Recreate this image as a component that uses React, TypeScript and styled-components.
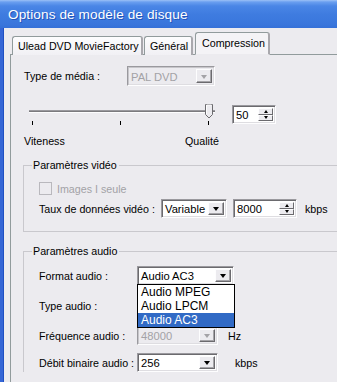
import React from 'react';
import styled, { createGlobalStyle } from 'styled-components';

const Global = createGlobalStyle`
  html, body {
    margin: 0;
    padding: 0;
    background: #ecebef;
  }
  body {
    font-family: "Liberation Sans", Arial, sans-serif;
    font-size: 10.7px;
    color: #000;
  }
`;

const bg = '#ecebef';

const Window = styled.div`
  width: 337px;
  height: 382px;
  overflow: hidden;
  display: flex;
  flex-direction: column;
`;

const TitleBar = styled.div`
  height: 28px;
  flex: none;
  display: flex;
  align-items: center;
  padding: 1px 0 0 8px;
  box-sizing: border-box;
  background: linear-gradient(180deg, #9cc1f6 0px, #6a9ff0 2px, #4a86e6 6px, #3f7ce0 14px, #3a76dc 24px, #3570d8 28px);
  color: #fff;
  font-size: 13.6px;
  letter-spacing: 0.1px;
  text-shadow: 1px 1px 0 #2453b8;
`;

const Body = styled.div`
  flex: 1;
  display: flex;
  flex-direction: column;
  border-left: 3px solid #3566d6;
  box-shadow: inset 1px 0 0 #1f4fc2;
  padding: 5px 0 0 7px;
  background: ${bg};
`;

const TabStrip = styled.div`
  height: 22px;
  display: flex;
  align-items: flex-end;
  padding-left: 2px;
  position: relative;
  z-index: 1;
  margin-bottom: -1px;
`;

const Tab = styled.div<{ $w: number; $active?: boolean }>`
  width: ${(p) => p.$w}px;
  height: ${(p) => (p.$active ? 23 : 19)}px;
  box-sizing: border-box;
  margin-right: ${(p) => (p.$active ? 0 : 1)}px;
  margin-left: ${(p) => (p.$active ? 1 : 0)}px;
  border: 1px solid #919b9c;
  border-bottom: ${(p) => (p.$active ? `1px solid ${bg}` : 'none')};
  border-right: 2px solid #a9a8ad;
  border-radius: 3px 3px 0 0;
  background: ${(p) => (p.$active ? '#f4f3f6' : 'linear-gradient(#fdfdfe, #f1f0f4)')};
  padding: ${(p) => (p.$active ? '4px 0 0 6px' : '3px 0 0 5px')};
  white-space: nowrap;
  overflow: hidden;
`;

const Panel = styled.div`
  flex: 1;
  width: 360px;
  border: 1px solid #919b9c;
  border-right: none;
  border-bottom: none;
  background: ${bg};
  padding: 0 0 0 12px;
  box-sizing: border-box;
`;

const Row = styled.div<{ $mt: number; $h: number }>`
  display: flex;
  align-items: center;
  margin-top: ${(p) => p.$mt}px;
  height: ${(p) => p.$h}px;
  position: relative;
`;

const Label = styled.div<{ $w?: number; $disabled?: boolean }>`
  width: ${(p) => (p.$w ? `${p.$w}px` : 'auto')};
  flex: none;
  white-space: nowrap;
  color: ${(p) => (p.$disabled ? '#a3a2a6' : '#000')};
`;

const Unit = styled.div<{ $ml: number }>`
  margin-left: ${(p) => p.$ml}px;
`;

const Combo = styled.div<{ $w: number; $disabled?: boolean; $h?: number }>`
  width: ${(p) => p.$w}px;
  height: ${(p) => p.$h ?? 19}px;
  flex: none;
  box-sizing: border-box;
  display: flex;
  align-items: stretch;
  border: 1px solid;
  border-color: #9a999e #fdfdfe #fdfdfe #9a999e;
  box-shadow: inset 1px 1px 0 ${(p) => (p.$disabled ? '#c7c6ca' : '#6b6a6e')}, inset -1px -1px 0 #dedde1;
  background: ${(p) => (p.$disabled ? bg : '#fff')};
  color: ${(p) => (p.$disabled ? '#a3a2a6' : '#000')};
  font-size: 11.2px;
  position: relative;
`;

const FieldText = styled.div`
  flex: 1;
  display: flex;
  align-items: center;
  padding: 1px 0 0 3px;
  overflow: hidden;
  white-space: nowrap;
`;

const DropButton = styled.div<{ $disabled?: boolean }>`
  width: 16px;
  margin: 2px 2px 2px 0;
  box-sizing: border-box;
  background: ${bg};
  border: 1px solid;
  border-color: #fdfdfe #6b6a6e #6b6a6e #fdfdfe;
  box-shadow: inset -1px -1px 0 #a5a4a8;
  display: flex;
  align-items: center;
  justify-content: center;
  &::after {
    content: '';
    border-top: 4px solid ${(p) => (p.$disabled ? '#a3a2a6' : '#000')};
    border-left: 3.5px solid transparent;
    border-right: 3.5px solid transparent;
    margin-top: 1px;
  }
`;

const SpinButtons = styled.div`
  width: 15px;
  margin: 2px 2px 2px 0;
  display: flex;
  flex-direction: column;
`;

const SpinButton = styled.div<{ $up?: boolean }>`
  flex: 1;
  box-sizing: border-box;
  background: ${bg};
  border: 1px solid;
  border-color: #fdfdfe #6b6a6e #6b6a6e #fdfdfe;
  display: flex;
  align-items: center;
  justify-content: center;
  &::after {
    content: '';
    border-left: 2.5px solid transparent;
    border-right: 2.5px solid transparent;
    ${(p) => (p.$up ? 'border-bottom: 3px solid #000;' : 'border-top: 3px solid #000;')}
  }
`;

const Top = styled.div`
  padding-left: 1px;
`;

const SliderRow = styled.div`
  display: flex;
  align-items: flex-start;
  margin-top: 18px;
  height: 22px;
`;

const SpinWrap = styled.div`
  margin-top: 1px;
`;

const Scale = styled.div`
  display: flex;
  margin-top: 9px;
  height: 13px;
  line-height: 13px;
`;

const Group = styled.div<{ $mt: number; $h?: number }>`
  margin-top: ${(p) => p.$mt}px;
  ${(p) => (p.$h ? `height: ${p.$h}px;` : 'flex: 1;')}
  box-sizing: border-box;
  border: 1px solid #c9c8cd;
  border-right: none;
  ${(p) => (p.$h ? '' : 'border-bottom: none;')}
  padding-left: 15px;
`;

const GroupTitle = styled.div`
  margin: -7px 0 0 -7px;
  padding: 0 2px 0 1px;
  width: fit-content;
  height: 13px;
  line-height: 13px;
  background: ${bg};
`;

const Check = styled.div`
  width: 13px;
  height: 13px;
  box-sizing: border-box;
  border: 1px solid #b9b8bd;
  background: ${bg};
  margin-right: 5px;
  flex: none;
`;

const DropList = styled.div`
  position: absolute;
  top: 18px;
  left: 98px;
  width: 98px;
  box-sizing: border-box;
  border: 1px solid #000;
  background: #fff;
  font-size: 12px;
  z-index: 2;
`;

const Option = styled.div<{ $sel?: boolean }>`
  height: 14px;
  line-height: 14px;
  padding-left: 3px;
  background: ${(p) => (p.$sel ? '#316ac5' : '#fff')};
  color: ${(p) => (p.$sel ? '#fff' : '#000')};
`;

const AudioArea = styled.div`
  flex: 1;
  display: flex;
  flex-direction: column;
`;

function Slider() {
  return (
    <svg width={208} height={22} viewBox="0 0 208 22">
      <rect x={5} y={6} width={186} height={1} fill="#9a999e" />
      <rect x={5} y={7} width={186} height={1} fill="#7b7a7e" />
      <rect x={5} y={8} width={186} height={1} fill="#fdfdfe" />
      <path d="M181.5 0.5 h7 v10 l-3.5 3.5 l-3.5 -3.5 z" fill={bg} stroke="#6b6a6e" />
      <path d="M182.5 10 v-9 h5" fill="none" stroke="#fdfdfe" />
      <rect x={8} y={17} width={1} height={4} fill="#000" />
      <rect x={96} y={17} width={1} height={4} fill="#000" />
      <rect x={184} y={17} width={1} height={4} fill="#000" />
    </svg>
  );
}

function Spin({ w, value }: { w: number; value: string }) {
  return (
    <Combo $w={w} $h={19}>
      <FieldText>{value}</FieldText>
      <SpinButtons>
        <SpinButton $up />
        <SpinButton />
      </SpinButtons>
    </Combo>
  );
}

function Select({ w, value, disabled, h }: { w: number; value: string; disabled?: boolean; h?: number }) {
  return (
    <Combo $w={w} $disabled={disabled} $h={h}>
      <FieldText>{value}</FieldText>
      <DropButton $disabled={disabled} />
    </Combo>
  );
}

export default function App() {
  return (
    <Window>
      <Global />
      <TitleBar>Options de modèle de disque</TitleBar>
      <Body>
        <TabStrip>
          <Tab $w={131}>Ulead DVD MovieFactory</Tab>
          <Tab $w={49}>Général</Tab>
          <Tab $w={75} $active>Compression</Tab>
        </TabStrip>
        <Panel>
          <Top>
            <Row $mt={11} $h={20}>
              <Label $w={103}>Type de média :</Label>
              <Select w={88} h={20} value="PAL DVD" disabled />
            </Row>
            <SliderRow>
              <Slider />
              <SpinWrap>
                <Spin w={44} value="50" />
              </SpinWrap>
            </SliderRow>
            <Scale>
              <Label $w={161}>Viteness</Label>
              <Label>Qualité</Label>
            </Scale>
          </Top>
          <Group $mt={17} $h={67}>
            <GroupTitle>Paramètres vidéo</GroupTitle>
            <Row $mt={10} $h={13}>
              <Check />
              <Label $disabled>Images I seule</Label>
            </Row>
            <Row $mt={4} $h={19}>
              <Label $w={122}>Taux de données vidéo :</Label>
              <Select w={66} value="Variable" />
              <Unit $ml={6}>
                <Spin w={64} value="8000" />
              </Unit>
              <Unit $ml={8}>kbps</Unit>
            </Row>
          </Group>
          <Group $mt={19}>
            <GroupTitle>Paramètres audio</GroupTitle>
            <AudioArea>
              <Row $mt={8} $h={19}>
                <Label $w={98}>Format audio :</Label>
                <Select w={97} value="Audio AC3" />
                <DropList>
                  <Option>Audio MPEG</Option>
                  <Option>Audio LPCM</Option>
                  <Option $sel>Audio AC3</Option>
                </DropList>
              </Row>
              <Row $mt={11} $h={19}>
                <Label $w={98}>Type audio :</Label>
                <Select w={80} value="" />
              </Row>
              <Row $mt={11} $h={19}>
                <Label $w={98}>Fréquence audio :</Label>
                <Select w={81} value="48000" disabled />
                <Unit $ml={10}>Hz</Unit>
              </Row>
              <Row $mt={8} $h={19}>
                <Label $w={98}>Débit binaire audio :</Label>
                <Select w={81} value="256" />
                <Unit $ml={17}>kbps</Unit>
              </Row>
            </AudioArea>
          </Group>
        </Panel>
      </Body>
    </Window>
  );
}
